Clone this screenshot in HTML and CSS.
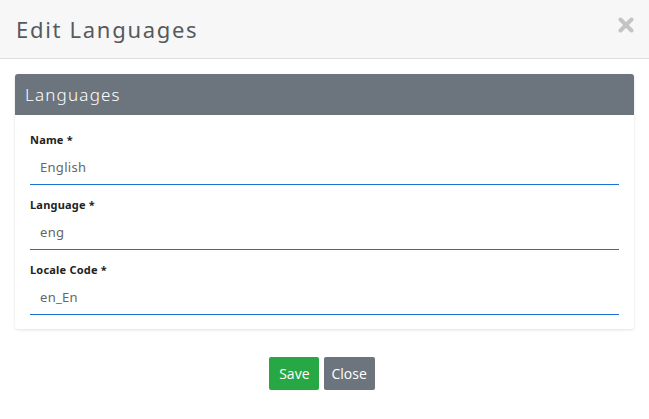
FILE: index.html
```html
<!DOCTYPE html>
<html>
<head>
<meta charset="utf-8">
<link rel="stylesheet" href="styles.css">
</head>
<body>
<div class="modal">
  <div class="modal-header">
    <h4 class="modal-title">Edit Languages</h4>
    <button class="close" aria-label="Close">
      <svg width="16" height="16" viewBox="0 0 16 16"><path d="M2.5 2.5 L13.5 13.5 M13.5 2.5 L2.5 13.5" stroke="#c4c4c4" stroke-width="4" stroke-linecap="round"/></svg>
    </button>
  </div>
  <div class="modal-body">
    <div class="card">
      <div class="card-header">Languages</div>
      <div class="card-body">
        <div class="group">
          <label class="label">Name *</label>
          <div class="input">English</div>
        </div>
        <div class="group">
          <label class="label">Language *</label>
          <div class="input">eng</div>
        </div>
        <div class="group">
          <label class="label">Locale Code *</label>
          <div class="input">en_En</div>
        </div>
      </div>
    </div>
  </div>
  <div class="modal-footer">
    <button class="btn btn-save">Save</button>
    <button class="btn btn-close">Close</button>
  </div>
</div>
</body>
</html>
```
FILE: styles.css
```css
html, body {
  margin: 0;
  padding: 0;
  background: #fff;
}
body {
  font-family: "Noto Sans", "Open Sans", sans-serif;
  width: 649px;
  height: 419px;
  overflow: hidden;
}
.modal-header {
  height: 58px;
  background: #f7f7f7;
  border-bottom: 1px solid #dedede;
  display: flex;
  align-items: center;
  justify-content: space-between;
  padding: 0 16px;
}
.modal-title {
  margin: 0;
  font-size: 22px;
  font-weight: 400;
  color: #555a5f;
  line-height: 1;
  letter-spacing: 1.7px;
  padding-bottom: 1px;
}
.close {
  background: none;
  border: 0;
  padding: 0;
  margin-right: -1px;
  margin-top: -8px;
  display: flex;
}
.modal-body {
  padding: 15px;
}
.card {
  border-radius: 3px;
  box-shadow: 0 1px 3px rgba(0, 0, 0, 0.12);
  overflow: hidden;
}
.card-header {
  height: 41px;
  background: #6c757d;
  color: #fff;
  font-size: 17px;
  font-weight: 300;
  letter-spacing: 1.2px;
  display: flex;
  align-items: center;
  padding-left: 10px;
}
.card-body {
  padding: 17px 15px 14px;
}
.group + .group {
  margin-top: 12px;
}
.label {
  display: block;
  font-size: 11px;
  font-weight: 700;
  color: #222;
  line-height: 16px;
  letter-spacing: 0.2px;
  margin-bottom: 2px;
}
.input {
  height: 34px;
  border-bottom: 1px solid #1a73d4;
  padding-left: 10px;
  font-size: 13px;
  letter-spacing: 0.3px;
  color: #666;
  display: flex;
  align-items: center;
}
.modal-footer {
  display: flex;
  justify-content: center;
  gap: 5px;
  padding-top: 13px;
  padding-right: 5px;
}
.btn {
  height: 33px;
  border: 0;
  border-radius: 2px;
  color: #fff;
  font-family: "Open Sans", sans-serif;
  font-size: 14px;
  padding: 0 9px 0 10px;
}
.btn-save {
  background: #28a745;
}
.btn-close {
  background: #6c757d;
  padding: 0 8px;
}
```
